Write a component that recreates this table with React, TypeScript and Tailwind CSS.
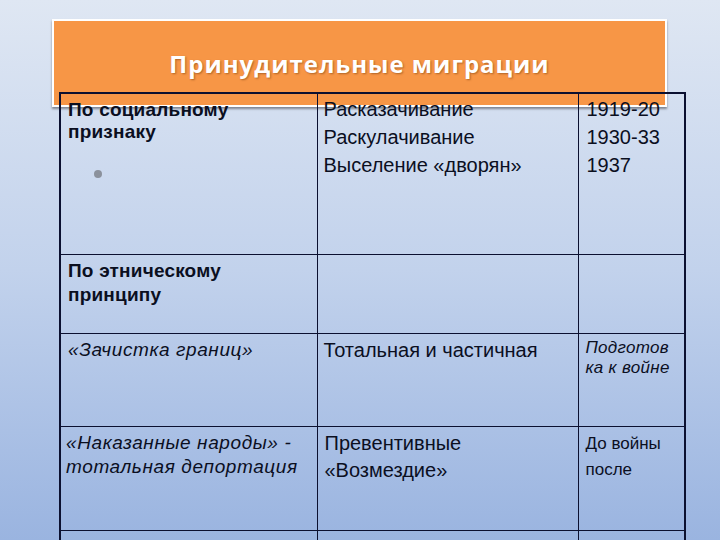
import React from "react";

const arial = { fontFamily: '"Liberation Sans", Arial, sans-serif' };

export default function App() {
  return (
    <div
      className="relative w-[720px] h-[540px] overflow-hidden bg-gradient-to-b from-[#dfe7f3] via-[#c2d2ec] to-[#9ab4e0]"
      style={arial}
    >
      <div className="pt-[19px]">
        {/* Title box */}
        <div className="ml-[52px] w-[615px] h-[88px] border-2 border-white bg-[#f79646] shadow-[0_2px_2px_rgba(60,60,70,0.55)] flex flex-col">
          <div className="h-[29px]" />
          <div
            className="text-center text-white font-bold text-[24px] leading-[28px] tracking-[1px] [text-shadow:1px_1px_2px_rgba(90,40,0,0.45)]"
            style={{ fontFamily: '"Open Sans", "Noto Sans", sans-serif' }}
          >
            Принудительные миграции
          </div>
        </div>

        {/* Table */}
        <table className="relative z-10 -mt-[15px] ml-[59px] w-[625px] table-fixed border-collapse border-2 border-[#0b1030] text-[#0b0f1f]">
          <colgroup>
            <col className="w-[257px]" />
            <col className="w-[261px]" />
            <col className="w-[107px]" />
          </colgroup>
          <tbody>
            <tr className="h-[161px] align-top">
              <td className="border border-[#0b1030] pl-[7px] pt-[5px]">
                <div className="font-bold text-[19px] leading-[22px] tracking-[0.2px]">
                  По социальному
                  <br />
                  признаку
                </div>
                <div className="mt-[27px] ml-[26px] w-[8px] h-[8px] rounded-full bg-[#8b919c]" />
              </td>
              <td className="border border-[#0b1030] pl-[6px] pt-[1px] text-[20px] leading-[28px]">
                Расказачивание
                <br />
                Раскулачивание
                <br />
                Выселение «дворян»
              </td>
              <td className="border border-[#0b1030] pl-[8px] pt-[1px] text-[20px] leading-[28px]">
                1919-20
                <br />
                1930-33
                <br />
                1937
              </td>
            </tr>
            <tr className="h-[79px] align-top">
              <td className="border border-[#0b1030] pl-[7px] pt-[4px] font-bold text-[19px] leading-[24px] tracking-[0.2px]">
                По этническому
                <br />
                принципу
              </td>
              <td className="border border-[#0b1030]" />
              <td className="border border-[#0b1030]" />
            </tr>
            <tr className="h-[93px] align-top">
              <td className="border border-[#0b1030] pl-[7px] pt-[4px] italic text-[19px] leading-[24px] tracking-[0.6px]">
                «Зачистка границ»
              </td>
              <td className="border border-[#0b1030] pl-[6px] pt-[4px] text-[20px] leading-[24px]">
                Тотальная и частичная
              </td>
              <td className="border border-[#0b1030] pl-[7px] pt-[4px] italic text-[17px] leading-[20px] tracking-[0.3px]">
                Подготов
                <br />
                ка к войне
              </td>
            </tr>
            <tr className="h-[104px] align-top">
              <td className="border border-[#0b1030] pl-[5px] pt-[4px] italic text-[19px] leading-[24px] tracking-[0.6px]">
                «Наказанные народы» -
                <br />
                тотальная депортация
              </td>
              <td className="border border-[#0b1030] pl-[7px] pt-[3px] text-[20px] leading-[27px]">
                Превентивные
                <br />
                «Возмездие»
              </td>
              <td className="border border-[#0b1030] pl-[7px] pt-[4px] text-[17px] leading-[26px]">
                До войны
                <br />
                после
              </td>
            </tr>
            <tr className="h-[60px] align-top">
              <td className="border border-[#0b1030] pl-[7px] pt-[6px] font-bold text-[19px] leading-[24px]">
                Корейцы
              </td>
              <td className="border border-[#0b1030]" />
              <td className="border border-[#0b1030]" />
            </tr>
          </tbody>
        </table>
      </div>
    </div>
  );
}
